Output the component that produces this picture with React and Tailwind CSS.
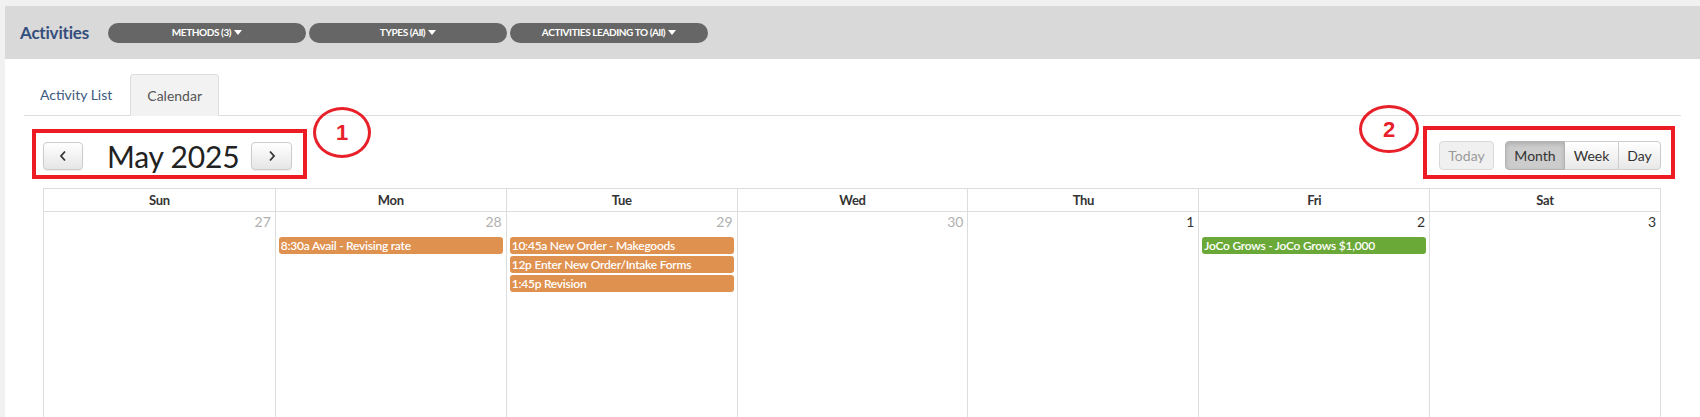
const days = ['Sun', 'Mon', 'Tue', 'Wed', 'Thu', 'Fri', 'Sat'];

const cells = [
  { n: 27, other: true, events: [] },
  { n: 28, other: true, events: [{ text: '8:30a Avail - Revising rate', color: 'orange' }] },
  {
    n: 29,
    other: true,
    events: [
      { text: '10:45a New Order - Makegoods', color: 'orange' },
      { text: '12p Enter New Order/Intake Forms', color: 'orange' },
      { text: '1:45p Revision', color: 'orange' },
    ],
  },
  { n: 30, other: true, events: [] },
  { n: 1, events: [] },
  { n: 2, events: [{ text: 'JoCo Grows - JoCo Grows $1,000', color: 'green' }] },
  { n: 3, events: [] },
];

function Caret() {
  return (
    <svg width="8" height="5" viewBox="0 0 8 5" className="ml-[3px] inline-block">
      <path d="M0 0 L8 0 L4 5 Z" fill="#fff" />
    </svg>
  );
}

function Pill({ children }) {
  return (
    <button className="w-[198px] h-[20px] rounded-full bg-[#666666] text-white text-[10px] font-bold tracking-[-0.4px] flex items-center justify-center">
      {children}
      <Caret />
    </button>
  );
}

function Chevron({ dir }) {
  return (
    <svg width="8" height="12" viewBox="0 0 8 12">
      <path
        d={dir === 'left' ? 'M6 1.5 L2 6 L6 10.5' : 'M2 1.5 L6 6 L2 10.5'}
        fill="none"
        stroke="#333"
        strokeWidth="1.8"
      />
    </svg>
  );
}

export default function App() {
  return (
    <div className="w-[1700px] h-[417px] overflow-hidden bg-[#f1f1f1] pt-[6px] pl-[5px] font-['Lato','Open_Sans',sans-serif] relative">
      <div className="bg-white h-[420px]">
        {/* top bar */}
        <div className="h-[53px] bg-[#d9d9d9] flex items-center pl-[15px]">
          <span className="w-[88px] text-[17px] font-bold text-[#344e7c] tracking-[-0.2px]">Activities</span>
          <div className="flex gap-[3px]">
            <Pill>METHODS (3)</Pill>
            <Pill>TYPES (All)</Pill>
            <Pill>ACTIVITIES LEADING TO (All)</Pill>
          </div>
        </div>

        {/* tabs */}
        <div className="mx-[19px] mt-[15px] flex items-end border-b border-[#dddddd] h-[42px]">
          <div className="h-[41px] px-[16px] flex items-center text-[14px] text-[#3d5a80]">Activity List</div>
          <div className="ml-[2px] h-[42px] -mb-px px-[16px] flex items-center text-[14px] text-[#555] bg-[#f2f2f2] border border-[#dddddd] border-b-[#f2f2f2] rounded-t-[4px]">
            Calendar
          </div>
        </div>

        {/* calendar */}
        <div className="ml-[38px] w-[1618px]">
          <div className="mt-[25px] h-[29px] flex items-center">
            <button className="w-[40px] h-[28px] rounded-[4px] border border-[#cccccc] bg-gradient-to-b from-white to-[#e6e6e6] flex items-center justify-center shadow-[0_1px_1px_rgba(0,0,0,0.08)]">
              <Chevron dir="left" />
            </button>
            <h2 className="ml-[24px] mr-[12px] text-[30px] leading-none text-[#222] tracking-[-0.2px]">May 2025</h2>
            <button className="w-[41px] h-[28px] rounded-[4px] border border-[#cccccc] bg-gradient-to-b from-white to-[#e6e6e6] flex items-center justify-center shadow-[0_1px_1px_rgba(0,0,0,0.08)]">
              <Chevron dir="right" />
            </button>
            <div className="ml-auto flex items-center">
              <button className="w-[55px] h-[29px] rounded-[4px] border border-[#d9d9d9] bg-[#f0f0f0] text-[14px] text-[#9a9a9a]">
                Today
              </button>
              <div className="ml-[11px] flex h-[29px]">
                <button className="w-[60px] rounded-l-[4px] border border-[#b3b3b3] bg-[#cccccc] shadow-[inset_0_2px_4px_rgba(0,0,0,0.15)] text-[14px] text-[#333]">
                  Month
                </button>
                <button className="w-[53px] border-y border-[#cccccc] bg-gradient-to-b from-white to-[#e8e8e8] text-[14px] text-[#333]">
                  Week
                </button>
                <button className="w-[43px] rounded-r-[4px] border border-[#cccccc] bg-gradient-to-b from-white to-[#e8e8e8] text-[14px] text-[#333]">
                  Day
                </button>
              </div>
            </div>
          </div>

          {/* grid */}
          <div className="mt-[18px] border border-[#dddddd]">
            <div className="grid grid-cols-7 h-[21px]">
              {days.map((d, i) => (
                <div
                  key={d}
                  className={`flex items-center justify-center pt-[2px] text-[13px] font-bold text-[#333] tracking-[-0.3px] border-b border-[#dddddd] ${i > 0 ? 'border-l' : ''}`}
                >
                  {d}
                </div>
              ))}
            </div>
            <div className="grid grid-cols-7 h-[220px]">
              {cells.map((c, i) => (
                <div key={c.n} className={`pt-[3px] border-[#dddddd] ${i > 0 ? 'border-l' : ''}`}>
                  <div className={`text-right pr-[4px] text-[14px] leading-[18px] ${c.other ? 'text-[#b0b0b0]' : 'text-[#333]'}`}>
                    {c.n}
                  </div>
                  <div className="mt-[6px] flex flex-col gap-[2px] px-[3px]">
                    {c.events.map((e) => (
                      <div
                        key={e.text}
                        className={`h-[17px] rounded-[3px] px-[2px] flex items-center text-[12px] font-semibold text-white tracking-[-0.25px] whitespace-nowrap overflow-hidden ${
                          e.color === 'green' ? 'bg-[#6aa937]' : 'bg-[#df914f]'
                        }`}
                      >
                        {e.text}
                      </div>
                    ))}
                  </div>
                </div>
              ))}
            </div>
          </div>
        </div>
      </div>

      {/* annotations */}
      <div className="absolute left-[32px] top-[129px] w-[275px] h-[50px] border-[4px] border-[#ed1c24]" />
      <div className="absolute left-[313px] top-[107px] w-[58px] h-[51px] rounded-[50%] border-[3px] border-[#e8202a] flex items-center justify-center text-[22px] font-bold text-[#e8202a] font-['Liberation_Sans',sans-serif]">
        1
      </div>
      <div className="absolute left-[1423px] top-[126px] w-[252px] h-[53px] border-[4px] border-[#ed1c24]" />
      <div className="absolute left-[1359px] top-[105px] w-[60px] h-[48px] rounded-[50%] border-[3px] border-[#e8202a] flex items-center justify-center text-[22px] font-bold text-[#e8202a] font-['Liberation_Sans',sans-serif]">
        2
      </div>
    </div>
  );
}
